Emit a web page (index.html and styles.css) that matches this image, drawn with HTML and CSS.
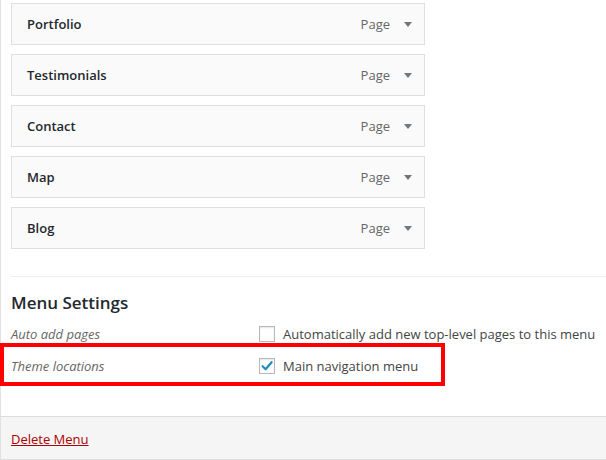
FILE: index.html
```html
<!DOCTYPE html>
<html>
<head>
<meta charset="utf-8">
<link rel="stylesheet" href="styles.css">
</head>
<body>
<div class="panel">
  <div class="menu-body">
    <ul class="menu-list">
      <li class="item"><span class="title">Portfolio</span><span class="type">Page</span><span class="arrow"></span></li>
      <li class="item"><span class="title">Testimonials</span><span class="type">Page</span><span class="arrow"></span></li>
      <li class="item"><span class="title">Contact</span><span class="type">Page</span><span class="arrow"></span></li>
      <li class="item"><span class="title">Map</span><span class="type">Page</span><span class="arrow"></span></li>
      <li class="item"><span class="title">Blog</span><span class="type">Page</span><span class="arrow"></span></li>
    </ul>
    <div class="settings">
      <h3 class="settings-title">Menu Settings</h3>
      <div class="row">
        <span class="label">Auto add pages</span>
        <label class="opt"><span class="box"></span>Automatically add new top-level pages to this menu</label>
      </div>
      <div class="row">
        <span class="label">Theme locations</span>
        <label class="opt"><span class="box checked"><svg viewBox="0 0 16 16" width="16" height="16"><path d="M3.6 8.2 L6.6 11.2 L12.6 4.2" fill="none" stroke="#1e8cbe" stroke-width="2.2" stroke-linecap="round" stroke-linejoin="round"/></svg></span>Main navigation menu</label>
      </div>
      <div class="highlight"></div>
    </div>
  </div>
  <div class="footer"><a class="delete" href="#">Delete Menu</a></div>
</div>
</body>
</html>
```
FILE: styles.css
```css
html, body {
  margin: 0;
  padding: 0;
  background: #fff;
}
body {
  font-family: "Open Sans", "Liberation Sans", sans-serif;
  font-size: 13px;
  color: #23282d;
  width: 606px;
  height: 460px;
  overflow: hidden;
}
.panel {
  border-left: 1px solid #e1e1e1;
  height: 460px;
  box-sizing: border-box;
  display: flex;
  flex-direction: column;
}
.menu-body {
  padding: 3px 0 0 10px;
  flex: 1;
}
.menu-list {
  list-style: none;
  margin: 0;
  padding: 0 0 27px 0;
  border-bottom: 1px solid #eee;
}
.item {
  width: 414px;
  height: 42px;
  box-sizing: border-box;
  border: 1px solid #dfdfdf;
  background: #fafafa;
  margin-bottom: 9px;
  display: flex;
  align-items: center;
  padding: 0 12px 0 15px;
}
.item:last-child {
  margin-bottom: 0;
}
.title {
  flex: 1;
  font-weight: 600;
  color: #23282d;
}
.type {
  color: #666;
  margin-right: 14px;
}
.arrow {
  width: 0;
  height: 0;
  border-left: 4px solid transparent;
  border-right: 4px solid transparent;
  border-top: 5px solid #72777c;
  margin-top: 1px;
}
.settings {
  position: relative;
  padding-top: 13px;
}
.settings-title {
  margin: 0 0 2px 0;
  font-size: 17px;
  font-weight: 600;
  line-height: 26px;
  color: #23282d;
}
.row {
  display: flex;
  align-items: center;
  height: 32px;
}
.label {
  width: 248px;
  font-style: italic;
  color: #666;
}
.opt {
  display: flex;
  align-items: center;
  color: #444;
}
.box {
  width: 16px;
  height: 16px;
  box-sizing: border-box;
  border: 1px solid #b4b9be;
  background: #fff;
  box-shadow: inset 0 1px 2px rgba(0,0,0,.1);
  margin-right: 8px;
  position: relative;
}
.box svg {
  position: absolute;
  left: -1px;
  top: -1px;
}
.highlight {
  position: absolute;
  left: -11px;
  top: 66px;
  width: 445px;
  height: 43px;
  box-sizing: border-box;
  border: 4px solid #ff0000;
}
.footer {
  border-top: 1px solid #dddddd;
  border-bottom: 1px solid #dddddd;
  background: #f5f5f5;
  height: 44px;
  box-sizing: border-box;
  display: flex;
  align-items: center;
  padding: 1px 10px 0 10px;
}
.delete {
  color: #a00;
  text-decoration: underline;
}
```
